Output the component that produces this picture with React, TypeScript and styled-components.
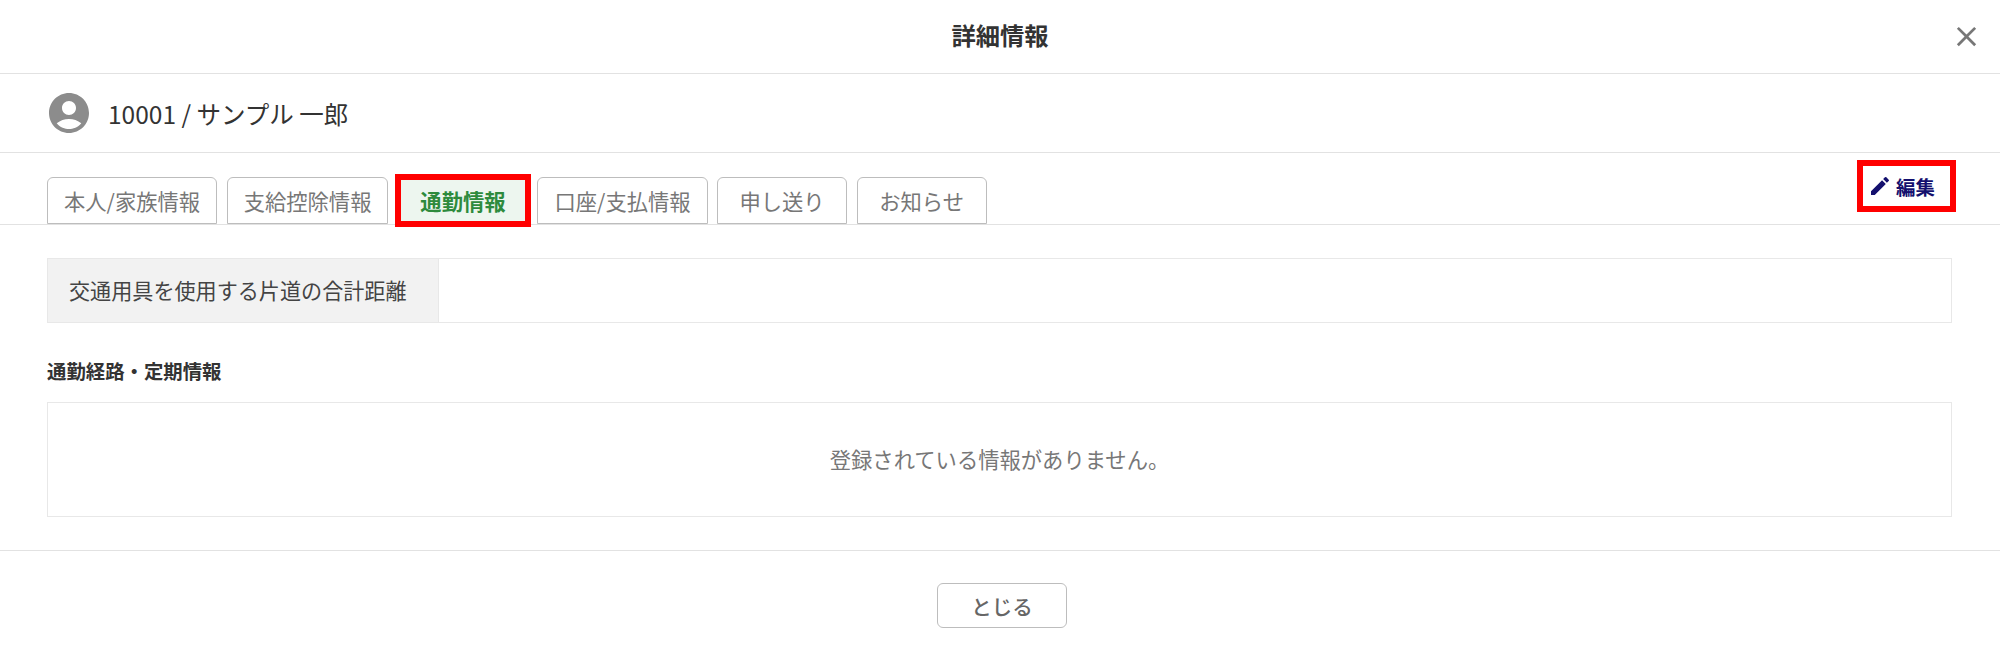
import React from 'react';
import styled, { createGlobalStyle } from 'styled-components';
import { MdAccountCircle, MdClose, MdEdit } from 'react-icons/md';

const GlobalStyle = createGlobalStyle`
  html, body {
    margin: 0;
    padding: 0;
    background: #fff;
  }
  body {
    font-family: "Noto Sans CJK JP", "Noto Sans", sans-serif;
    color: #333;
  }
`;

const Modal = styled.div`
  width: 2000px;
  height: 657px;
  display: flex;
  flex-direction: column;
  background: #fff;
`;

const Header = styled.header`
  height: 73px;
  flex: none;
  display: flex;
  align-items: center;
  justify-content: center;
  position: relative;
  border-bottom: 1px solid #e2e2e2;
`;

const Title = styled.h1`
  margin: 0 0 4px;
  font-size: 24.3px;
  font-weight: 700;
  color: #333;
`;

const CloseButton = styled.button`
  position: absolute;
  right: 14px;
  top: 16px;
  width: 40px;
  height: 40px;
  padding: 0;
  border: 0;
  background: none;
  color: #777;
  display: flex;
  align-items: center;
  justify-content: center;
  font-size: 33px;
`;

const UserRow = styled.div`
  height: 78px;
  flex: none;
  display: flex;
  align-items: center;
  gap: 17px;
  padding-left: 45px;
  border-bottom: 1px solid #e2e2e2;
  font-size: 24.5px;
  color: #333;
  svg {
    font-size: 48px;
    color: #8c8c8c;
    margin-right: -2px;
  }
`;

const TabBar = styled.div`
  height: 71px;
  flex: none;
  display: flex;
  align-items: flex-end;
  justify-content: space-between;
  padding: 0 47px;
  border-bottom: 1px solid #e2e2e2;
`;

const Tabs = styled.nav`
  display: flex;
  gap: 9.5px;
`;

const Tab = styled.div<{ $active?: boolean }>`
  position: relative;
  height: 47px;
  min-width: 130px;
  box-sizing: border-box;
  padding: 0 16px;
  display: flex;
  align-items: center;
  justify-content: center;
  font-size: 21.3px;
  border: 1px solid #bdbdbd;
  border-radius: 6px 6px 0 0;
  background: ${props => (props.$active ? '#edf6ef' : '#fff')};
  color: ${props => (props.$active ? '#2e8b3d' : '#777')};
  font-weight: ${props => (props.$active ? 700 : 400)};
  ${props => props.$active && `
    border-color: transparent;
    &::after {
      content: '';
      position: absolute;
      inset: -4px;
      border: 6px solid #ff0000;
    }
  `}
`;

const EditButton = styled.button`
  position: relative;
  align-self: flex-start;
  margin-top: 10px;
  width: 93px;
  height: 46px;
  padding: 0 0 0 8px;
  border: 0;
  background: #fff;
  display: flex;
  align-items: center;
  gap: 4px;
  font-family: inherit;
  font-size: 19.4px;
  font-weight: 700;
  color: #14106e;
  svg {
    font-size: 24px;
  }
  &::after {
    content: '';
    position: absolute;
    inset: -3px;
    border: 6px solid #ff0000;
  }
`;

const Body = styled.main`
  flex: 1;
  padding: 33px 48px 33px 47px;
  display: flex;
  flex-direction: column;
  border-bottom: 1px solid #e2e2e2;
`;

const InfoTable = styled.div`
  display: grid;
  grid-template-columns: 391px 1fr;
  height: 65px;
  box-sizing: border-box;
  border: 1px solid #e8e8e8;
`;

const InfoLabel = styled.div`
  display: flex;
  align-items: center;
  padding: 0 0 2px 21px;
  background: #f2f2f2;
  border-right: 1px solid #e8e8e8;
  font-size: 21.1px;
  color: #444;
`;

const InfoValue = styled.div`
  background: #fff;
`;

const SectionHeading = styled.h2`
  margin: 34px 0 17px;
  font-size: 19.4px;
  line-height: 28px;
  font-weight: 700;
  color: #333;
`;

const EmptyBox = styled.div`
  height: 115px;
  box-sizing: border-box;
  padding-bottom: 2px;
  border: 1px solid #e8e8e8;
  display: flex;
  align-items: center;
  justify-content: center;
  font-size: 21.3px;
  color: #777;
`;

const Footer = styled.footer`
  height: 106px;
  flex: none;
  display: flex;
  justify-content: center;
  padding: 32px 0 0 4px;
  box-sizing: border-box;
`;

const CloseAction = styled.button`
  width: 130px;
  height: 45px;
  border: 1px solid #bdbdbd;
  border-radius: 6px;
  background: #fff;
  font-family: inherit;
  font-size: 20.5px;
  font-weight: 500;
  color: #666;
`;

const tabs = ['本人/家族情報', '支給控除情報', '通勤情報', '口座/支払情報', '申し送り', 'お知らせ'];

export default function App() {
  return (
    <>
      <GlobalStyle />
      <Modal>
        <Header>
          <Title>詳細情報</Title>
          <CloseButton aria-label="close">
            <MdClose />
          </CloseButton>
        </Header>
        <UserRow>
          <MdAccountCircle />
          <span>10001 / サンプル 一郎</span>
        </UserRow>
        <TabBar>
          <Tabs>
            {tabs.map(tab => (
              <Tab key={tab} $active={tab === '通勤情報'}>{tab}</Tab>
            ))}
          </Tabs>
          <EditButton>
            <MdEdit />
            編集
          </EditButton>
        </TabBar>
        <Body>
          <InfoTable>
            <InfoLabel>交通用具を使用する片道の合計距離</InfoLabel>
            <InfoValue />
          </InfoTable>
          <SectionHeading>通勤経路・定期情報</SectionHeading>
          <EmptyBox>登録されている情報がありません。</EmptyBox>
        </Body>
        <Footer>
          <CloseAction>とじる</CloseAction>
        </Footer>
      </Modal>
    </>
  );
}
